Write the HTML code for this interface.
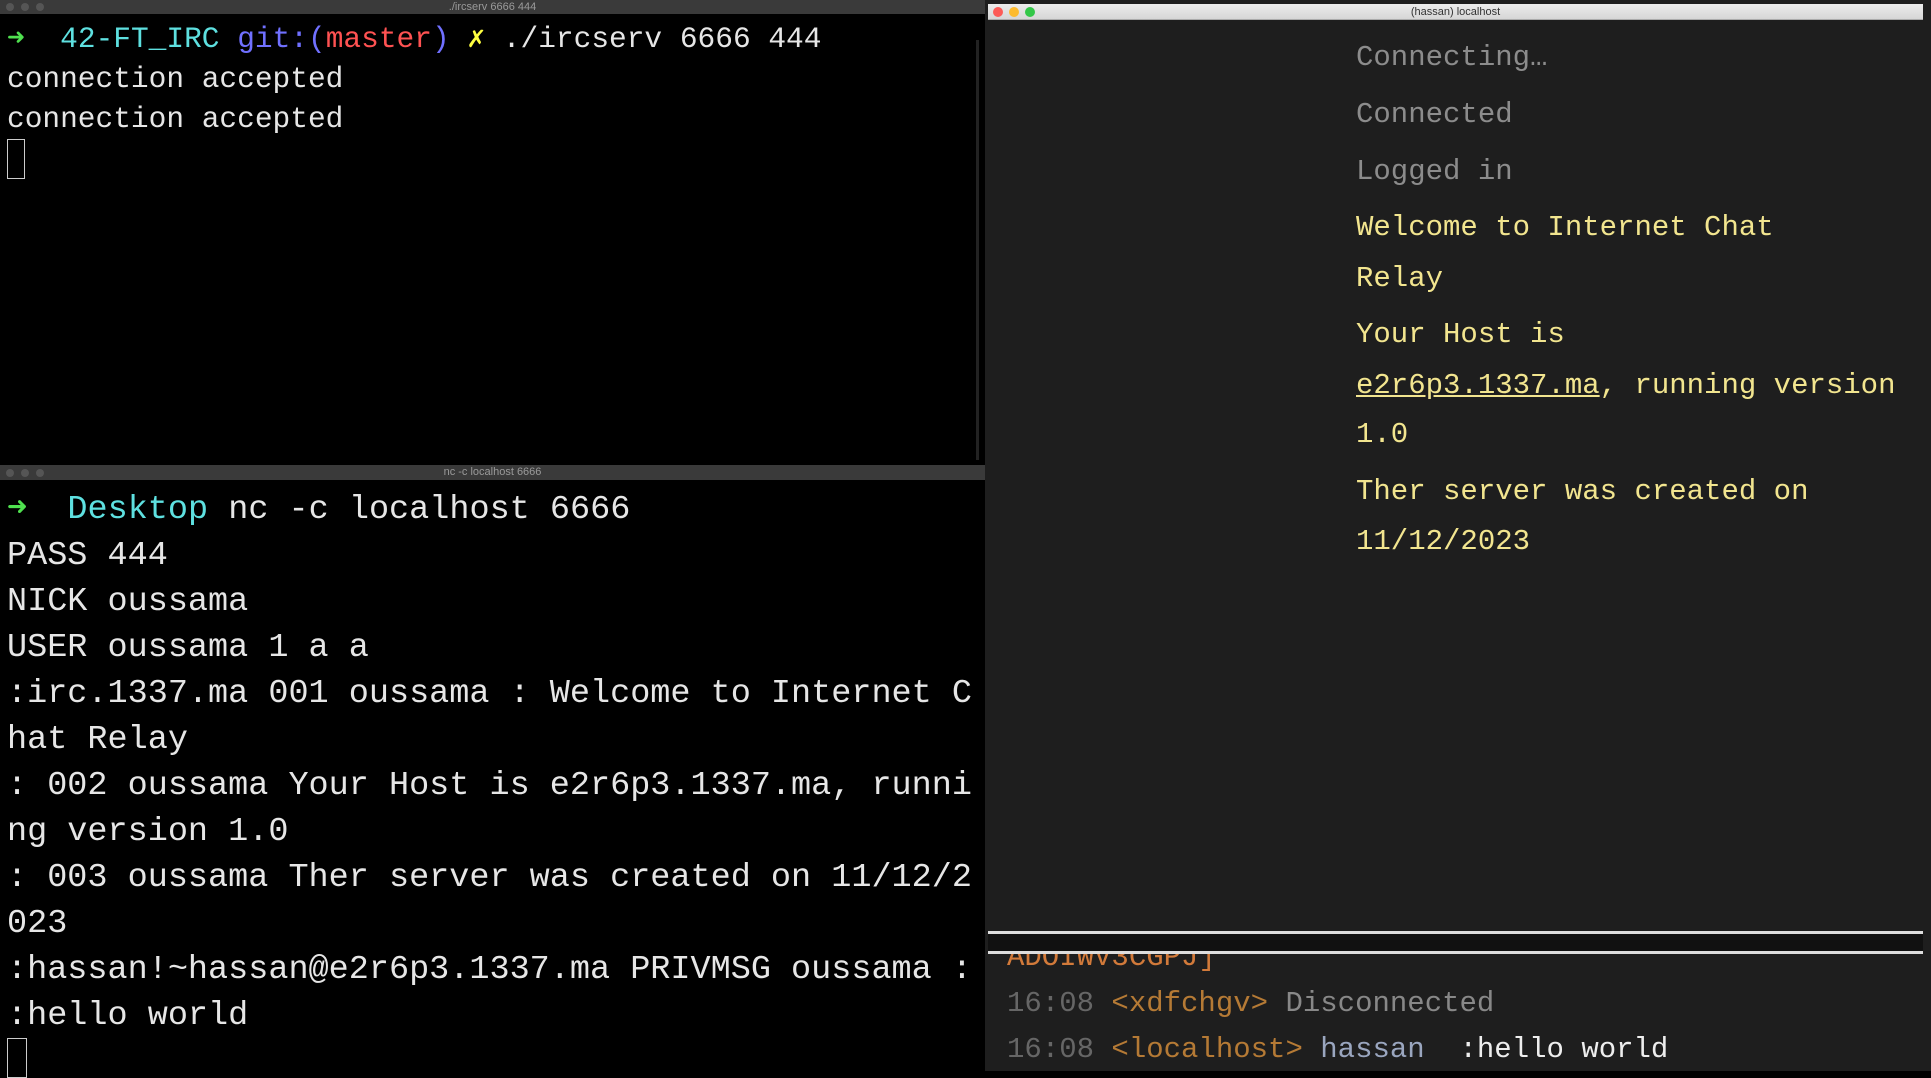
<!DOCTYPE html>
<html><head><meta charset="utf-8"><style>
*{margin:0;padding:0;box-sizing:border-box}
body{width:1931px;height:1071px;background:#000;position:relative;overflow:hidden;font-family:"Liberation Mono","DejaVu Sans Mono",monospace;}
.a{position:absolute;white-space:pre}
.tb{position:absolute;background:#3a3a3a;color:#9a9a9a;font-family:"Liberation Sans",sans-serif;font-size:11px;text-align:center}
.t{font-size:29.5px;line-height:40px;color:#e6e6e6;left:7px}
.b{font-size:33.5px;line-height:46px;color:#e6e6e6;left:7px}
.r{font-size:29px;line-height:40px;left:1356px}
.g{color:#8c8c8c}.y{color:#f2e58f}
</style></head><body>
<div class="tb" style="left:0;top:0;width:985px;height:14px;line-height:14px">./ircserv 6666 444</div>
<div class="a" style="left:6px;top:3px;width:8px;height:8px;border-radius:4px;background:#555"></div>
<div class="a" style="left:21px;top:3px;width:8px;height:8px;border-radius:4px;background:#555"></div>
<div class="a" style="left:36px;top:3px;width:8px;height:8px;border-radius:4px;background:#555"></div>
<div class="a t" style="top:19px"><span style="color:#4fe04f">➜</span>  <span style="color:#5ee0e0">42-FT_IRC</span> <span style="color:#7070ff">git:(</span><span style="color:#ff5252">master</span><span style="color:#7070ff">)</span> <span style="color:#ffff40">✗</span> ./ircserv 6666 444</div>
<div class="a t" style="top:59px">connection accepted</div>
<div class="a t" style="top:99px">connection accepted</div>
<div class="a" style="left:7px;top:139px;width:18px;height:40px;border:1.5px solid #ccc"></div>
<div class="a" style="left:976px;top:40px;width:3px;height:420px;background:#222"></div>
<div class="tb" style="left:0;top:465px;width:985px;height:15px;line-height:15px">nc -c localhost 6666</div>
<div class="a" style="left:6px;top:469px;width:8px;height:8px;border-radius:4px;background:#555"></div>
<div class="a" style="left:21px;top:469px;width:8px;height:8px;border-radius:4px;background:#555"></div>
<div class="a" style="left:36px;top:469px;width:8px;height:8px;border-radius:4px;background:#555"></div>
<div class="a b" style="top:487px"><span style="color:#4fe04f">➜</span>  <span style="color:#5ee0e0">Desktop</span> nc -c localhost 6666</div>
<div class="a b" style="top:533px">PASS 444</div>
<div class="a b" style="top:579px">NICK oussama</div>
<div class="a b" style="top:625px">USER oussama 1 a a</div>
<div class="a b" style="top:671px">:irc.1337.ma 001 oussama : Welcome to Internet C</div>
<div class="a b" style="top:717px">hat Relay</div>
<div class="a b" style="top:763px">: 002 oussama Your Host is e2r6p3.1337.ma, runni</div>
<div class="a b" style="top:809px">ng version 1.0</div>
<div class="a b" style="top:855px">: 003 oussama Ther server was created on 11/12/2</div>
<div class="a b" style="top:901px">023</div>
<div class="a b" style="top:947px">:hassan!~hassan@e2r6p3.1337.ma PRIVMSG oussama :</div>
<div class="a b" style="top:993px">:hello world</div>
<div class="a" style="left:7px;top:1038px;width:20px;height:40px;border:1.5px solid #ccc"></div>
<div class="a" style="left:985px;top:0;width:946px;height:1071px;background:#1e1e1e"></div>
<div class="a" style="left:988px;top:4px;width:935px;height:16px;background:linear-gradient(#ececec,#d6d6d6);border-bottom:1px solid #aaa;font-family:'Liberation Sans',sans-serif;font-size:11px;line-height:16px;text-align:center;color:#333">(hassan) localhost</div>
<div class="a" style="left:993px;top:7px;width:10px;height:10px;border-radius:5px;background:#fc5b57"></div>
<div class="a" style="left:1009px;top:7px;width:10px;height:10px;border-radius:5px;background:#fdbb2e"></div>
<div class="a" style="left:1025px;top:7px;width:10px;height:10px;border-radius:5px;background:#33c748"></div>
<div class="a r g" style="top:38px">Connecting…</div>
<div class="a r g" style="top:95px">Connected</div>
<div class="a r g" style="top:152px">Logged in</div>
<div class="a r y" style="top:208px">Welcome to Internet Chat</div>
<div class="a r y" style="top:259px">Relay</div>
<div class="a r y" style="top:315px">Your Host is</div>
<div class="a r y" style="top:366px"><u>e2r6p3.1337.ma</u>, running version</div>
<div class="a r y" style="top:415px">1.0</div>
<div class="a r y" style="top:472px">Ther server was created on</div>
<div class="a r y" style="top:522px">11/12/2023</div>
<div class="a" style="left:988px;top:931px;width:935px;height:3px;background:#ddd"></div>
<div class="a" style="left:988px;top:934px;width:935px;height:17px;background:#111"></div>
<div class="a" style="left:988px;top:951px;width:935px;height:3px;background:#ddd"></div>
<div class="a" style="left:1007px;top:954px;height:18px;overflow:hidden;font-size:29px;line-height:8px;color:#d27a3a">ADOIWV3CGPJ]</div>
<div class="a r" style="left:1007px;top:984px"><span style="color:#666">16:08</span> <span style="color:#b57a35">&lt;xdfchgv&gt;</span> <span style="color:#888">Disconnected</span></div>
<div class="a r" style="left:1007px;top:1030px"><span style="color:#666">16:08</span> <span style="color:#b57a35">&lt;localhost&gt;</span> <span style="color:#9aa6bf">hassan</span>  <span style="color:#eee">:hello world</span></div>
</body></html>
